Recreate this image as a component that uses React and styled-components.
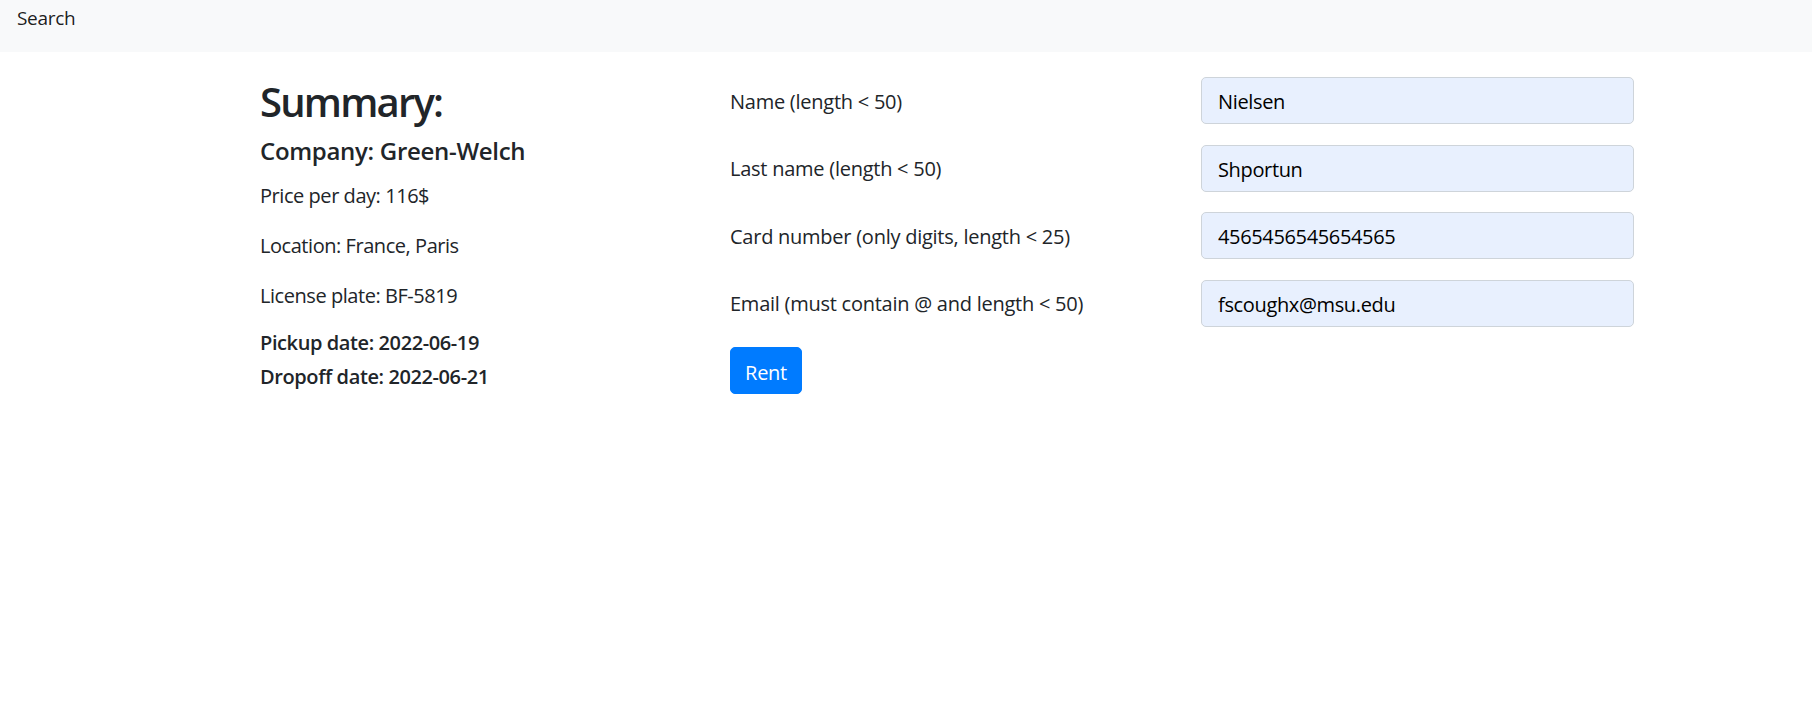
import React from "react";
import styled, { createGlobalStyle } from "styled-components";

const GlobalStyle = createGlobalStyle`
  * {
    box-sizing: border-box;
  }

  body {
    margin: 0;
    background: #fff;
    color: #212529;
    font-family: "Open Sans", "Noto Sans", sans-serif;
    font-size: 20px;
    letter-spacing: -0.25px;
  }
`;

const fields = [
  { label: "Name (length < 50)", value: "Nielsen" },
  { label: "Last name (length < 50)", value: "Shportun" },
  { label: "Card number (only digits, length < 25)", value: "4565456545654565" },
  { label: "Email (must contain @ and length < 50)", value: "fscoughx@msu.edu" },
];

function App() {
  return (
    <>
      <GlobalStyle />
      <Navbar>
        <NavLink href="#">Search</NavLink>
      </Navbar>

      <Main>
        <Summary>
          <Title>Summary:</Title>
          <Company>Company: Green-Welch</Company>
          <Info>Price per day: 116$</Info>
          <Info>Location: France, Paris</Info>
          <Info>License plate: BF-5819</Info>
          <DateLine>Pickup date: 2022-06-19</DateLine>
          <DateLine>Dropoff date: 2022-06-21</DateLine>
        </Summary>

        <Form onSubmit={(e) => e.preventDefault()}>
          {fields.map((f) => (
            <FieldRow key={f.label}>
              <Label>{f.label}</Label>
              <Input defaultValue={f.value} />
            </FieldRow>
          ))}
          <RentButton type="submit">Rent</RentButton>
        </Form>
      </Main>
    </>
  );
}

export default App;

const Navbar = styled.nav`
  height: 52px;
  background-color: #f8f9fa;
  padding: 0 17px;
  display: flex;
  align-items: flex-start;
`;

const NavLink = styled.a`
  color: rgba(0, 0, 0, 0.9);
  text-decoration: none;
  font-size: 19px;
  letter-spacing: -0.3px;
  line-height: 36px;
`;

const Main = styled.main`
  display: flex;
  padding: 25px 0 0 260px;
`;

const Summary = styled.div`
  width: 470px;
  padding-top: 1px;
  display: flex;
  flex-direction: column;
`;

const Title = styled.h2`
  margin: 0 0 11px;
  font-size: 40px;
  font-weight: 600;
  letter-spacing: -1.8px;
  line-height: 1.2;
`;

const Company = styled.h5`
  margin: 0 0 15px;
  font-size: 24px;
  font-weight: 600;
  letter-spacing: -0.3px;
  line-height: 1.2;
`;

const Info = styled.p`
  margin: 0 0 20px;
  font-size: 20px;
  letter-spacing: -0.45px;
  line-height: 30px;
`;

const DateLine = styled.h6`
  margin: 0 0 10px;
  font-size: 20px;
  font-weight: 600;
  letter-spacing: -0.4px;
  line-height: 1.2;
`;

const Form = styled.form`
  display: flex;
  flex-direction: column;
  align-items: flex-start;
`;

const FieldRow = styled.div`
  display: grid;
  grid-template-columns: 471px 433px;
  align-items: center;
  margin-bottom: 20.5px;
`;

const Label = styled.label`
  padding-top: 2px;
  font-size: 20px;
  line-height: 30px;
`;

const Input = styled.input`
  height: 47px;
  width: 100%;
  padding: 2px 16px 0;
  font-family: inherit;
  font-size: 20px;
  letter-spacing: -0.35px;
  color: #000;
  background-color: #e8f0fe;
  border: 1px solid #ced4da;
  border-radius: 5px;
  outline: none;
`;

const RentButton = styled.button`
  width: 72px;
  height: 47px;
  padding: 3px 0 0;
  font-family: inherit;
  font-size: 20px;
  letter-spacing: -0.3px;
  color: #fff;
  background-color: #007bff;
  border: 1px solid #007bff;
  border-radius: 5px;
  cursor: pointer;
`;
